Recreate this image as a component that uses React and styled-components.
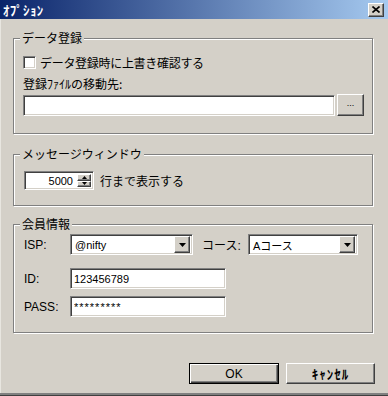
import React from 'react';
import styled, { createGlobalStyle, css } from 'styled-components';

const FONT = `"Liberation Sans", "Noto Sans CJK JP", sans-serif`;
const JP = `"Noto Sans CJK JP", "Liberation Sans", sans-serif`;

const Global = createGlobalStyle`
  html, body { margin: 0; padding: 0; background: #d4d0c8; }
  body { font-family: ${FONT}; font-size: 12px; color: #000; }
  * { box-sizing: border-box; }
`;

const sunken = css`
  border: 1px solid;
  border-color: #808080 #fff #fff #808080;
  box-shadow: inset 1px 1px 0 #404040, inset -1px -1px 0 #d4d0c8;
  background: #fff;
`;

const raised = css`
  border: 1px solid;
  border-color: #fff #404040 #404040 #fff;
  box-shadow: inset -1px -1px 0 #808080, inset 1px 1px 0 #d4d0c8;
  background: #d4d0c8;
`;

const Window = styled.div`
  width: 388px;
  height: 396px;
  background: #d4d0c8;
  display: flex;
  flex-direction: column;
  border-bottom: 1px solid #404040;
  box-shadow: inset 0 -2px 0 #808080, inset 1px 0 0 #e8e6e0;
  overflow: hidden;
`;

const TitleBar = styled.div`
  flex: none;
  height: 19px;
  display: flex;
  align-items: center;
  justify-content: space-between;
  padding: 0 4px 0 3px;
  background: linear-gradient(to right, #0a246a, #a6caf0);
`;

const Title = styled.span`
  color: #fff;
  font-family: ${JP};
  font-weight: bold;
  font-size: 13px;
  line-height: 19px;
  letter-spacing: 0.3px;
`;

const CloseButton = styled.div`
  ${raised};
  width: 16px;
  height: 14px;
  display: grid;
  place-items: center;
`;

const Content = styled.div`
  flex: 1;
  display: flex;
  flex-direction: column;
  padding: 11px 15px 0 13px;
`;

const Group = styled.fieldset`
  margin: ${p => p.$mt || 0}px 0 0 0;
  min-width: 0;
  padding: 0 8px ${p => p.$pb}px ${p => p.$pl || 10}px;
  border: 1px solid #808080;
  box-shadow: inset 1px 1px 0 #fff, 1px 1px 0 #fff;
  display: flex;
  flex-direction: column;
`;

const Legend = styled.legend`
  padding: 0 2px;
  margin-left: ${p => p.$ml || -4}px;
  height: 16px;
  font-family: ${JP};
  font-size: 12px;
  line-height: 16px;
  background: #d4d0c8;
`;

const Row = styled.div`
  display: flex;
  align-items: center;
  gap: ${p => p.$gap || 0}px;
  margin-top: ${p => p.$mt || 0}px;
  height: ${p => p.$h}px;
`;

const Text = styled.span`
  font-family: ${JP};
  font-size: 12px;
  line-height: 12px;
  letter-spacing: ${p => p.$ls || 0}px;
  white-space: nowrap;
`;

const FieldLabel = styled.div`
  margin-top: ${p => p.$mt || 0}px;
  font-family: ${JP};
  font-size: 12px;
  line-height: 12px;
  height: 12px;
  white-space: nowrap;
`;

const RowLabel = styled.span`
  width: ${p => p.$w}px;
  flex: none;
  margin-left: ${p => p.$ml || 0}px;
  font-family: ${FONT};
  font-size: 12px;
  white-space: nowrap;
`;

const CheckBox = styled.span`
  ${sunken};
  flex: none;
  width: 13px;
  height: 13px;
`;

const Edit = styled.input`
  ${sunken};
  flex: ${p => (p.$w ? 'none' : 1)};
  width: ${p => (p.$w ? `${p.$w}px` : 'auto')};
  min-width: 0;
  height: 21px;
  margin: 0;
  padding: 0 3px;
  font-family: ${FONT};
  font-size: 11px;
  letter-spacing: ${p => p.$ls || 0}px;
  color: #000;
  outline: none;
`;

const BrowseButton = styled.div`
  ${raised};
  flex: none;
  width: 27px;
  height: 22px;
  display: grid;
  place-items: center;
  font-family: ${FONT};
  font-size: 9px;
  line-height: 9px;
  padding-bottom: 3px;
`;

const Spinner = styled.div`
  ${sunken};
  flex: none;
  width: 70px;
  height: 19px;
  display: flex;
  padding: 2px;
`;

const SpinValue = styled.span`
  flex: 1;
  text-align: right;
  padding-right: 4px;
  font-family: ${FONT};
  font-size: 11px;
  line-height: 15px;
`;

const SpinButtons = styled.div`
  flex: none;
  width: 14px;
  display: flex;
  flex-direction: column;
`;

const SpinButton = styled.div`
  ${raised};
  flex: 1;
  display: grid;
  place-items: center;
`;

const Combo = styled.div`
  ${sunken};
  flex: none;
  width: ${p => p.$w}px;
  height: 21px;
  display: flex;
  align-items: center;
  padding: 2px;
`;

const ComboText = styled.span`
  flex: 1;
  padding-left: 2px;
  font-family: ${FONT};
  font-size: 11px;
  white-space: nowrap;
`;

const DropButton = styled.div`
  ${raised};
  flex: none;
  width: 16px;
  height: 17px;
  display: grid;
  place-items: center;
`;

const ButtonRow = styled.div`
  display: flex;
  justify-content: flex-end;
  gap: 7px;
  margin: 30px -2px 0 0;
`;

const PushButton = styled.div`
  ${raised};
  width: ${p => p.$w}px;
  height: 21px;
  display: grid;
  place-items: center;
  font-family: ${FONT};
  font-size: 12px;
  ${p =>
    p.$kana &&
    css`
      font-family: ${JP};
      font-size: 13px;
      font-weight: bold;
      letter-spacing: 1px;
    `}
  ${p =>
    p.$default &&
    css`
      border: 1px solid #000;
      box-shadow: inset 1px 1px 0 #fff, inset -1px -1px 0 #404040,
        inset -2px -2px 0 #808080;
    `}
`;

const Triangle = ({ w = 7, h = 4, up }) => (
  <svg width={w} height={h} viewBox={`0 0 ${w} ${h}`}>
    <polygon
      points={up ? `0,${h} ${w},${h} ${w / 2},0` : `0,0 ${w},0 ${w / 2},${h}`}
      fill="#000"
    />
  </svg>
);

const CloseGlyph = () => (
  <svg width="8" height="7" viewBox="0 0 8 7">
    <path d="M0.5 0.5 L7.5 6.5 M7.5 0.5 L0.5 6.5" stroke="#000" strokeWidth="1.6" />
  </svg>
);

const ComboBox = ({ w, value }) => (
  <Combo $w={w}>
    <ComboText>{value}</ComboText>
    <DropButton>
      <Triangle />
    </DropButton>
  </Combo>
);

export default function App() {
  return (
    <>
      <Global />
      <Window>
        <TitleBar>
          <Title>ｵﾌﾟｼｮﾝ</Title>
          <CloseButton>
            <CloseGlyph />
          </CloseButton>
        </TitleBar>
        <Content>
          <Group $pb={17} $pl={9}>
            <Legend $ml={-3}>データ登録</Legend>
            <Row $mt={10} $h={13} $gap={4}>
              <CheckBox />
              <Text $ls={-0.3}>データ登録時に上書き確認する</Text>
            </Row>
            <FieldLabel $mt={9}>登録ﾌｧｲﾙの移動先:</FieldLabel>
            <Row $mt={4} $h={22} $gap={2}>
              <Edit defaultValue="" />
              <BrowseButton>...</BrowseButton>
            </Row>
          </Group>

          <Group $mt={12} $pb={15}>
            <Legend>メッセージウィンドウ</Legend>
            <Row $mt={9} $h={19} $gap={6}>
              <Spinner>
                <SpinValue>5000</SpinValue>
                <SpinButtons>
                  <SpinButton>
                    <Triangle w={5} h={3} up />
                  </SpinButton>
                  <SpinButton>
                    <Triangle w={5} h={3} />
                  </SpinButton>
                </SpinButtons>
              </Spinner>
              <Text>行まで表示する</Text>
            </Row>
          </Group>

          <Group $mt={10} $pb={15}>
            <Legend>会員情報</Legend>
            <Row $mt={2} $h={21}>
              <RowLabel $w={46}>ISP:</RowLabel>
              <ComboBox w={123} value="@nifty" />
              <RowLabel $w={46} $ml={9}>
                コース:
              </RowLabel>
              <ComboBox w={110} value="Aコース" />
            </Row>
            <Row $mt={13} $h={21}>
              <RowLabel $w={46}>ID:</RowLabel>
              <Edit $w={156} defaultValue="123456789" />
            </Row>
            <Row $mt={7} $h={21}>
              <RowLabel $w={46}>PASS:</RowLabel>
              <Edit $w={156} $ls={1} defaultValue="*********" />
            </Row>
          </Group>

          <ButtonRow>
            <PushButton $w={90} $default>
              OK
            </PushButton>
            <PushButton $w={89} $kana>
              ｷｬﾝｾﾙ
            </PushButton>
          </ButtonRow>
        </Content>
      </Window>
    </>
  );
}
